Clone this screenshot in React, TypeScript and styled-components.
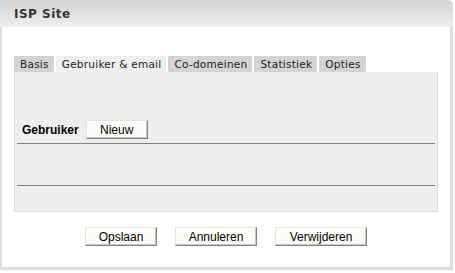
import React from 'react';
import styled, { createGlobalStyle } from 'styled-components';

const GlobalStyle = createGlobalStyle`
  html, body {
    margin: 0;
    padding: 0;
    background: #ffffff;
  }
`

const Frame = styled.div`
  width: 453px;
  height: 270px;
  box-sizing: border-box;
  display: flex;
  flex-direction: column;
  background: #ffffff;
  border-left: 2px solid #dedede;
  border-right: 3px solid #dedede;
  border-bottom: 3px solid #dedede;
  border-top-right-radius: 6px;
`

const Header = styled.div`
  height: 27px;
  margin: 0 -3px 0 -2px;
  padding-left: 14px;
  display: flex;
  align-items: center;
  background: linear-gradient(#d4d4d4, #eeeeee);
  border-top-right-radius: 6px;
  font-family: 'DejaVu Sans', Verdana, sans-serif;
  font-weight: bold;
  font-size: 12px;
  letter-spacing: 0.5px;
  color: #333333;
`

const Body = styled.div`
  padding: 29px 12px 0 12px;
  display: flex;
  flex-direction: column;
`

const TabBar = styled.div`
  display: flex;
  gap: 2px;
  height: 16px;
`

const Tab = styled.div<{ $active?: boolean }>`
  padding: 0 5px 0 6px;
  display: flex;
  align-items: center;
  background: ${p => (p.$active ? '#eeeeee' : '#d4d4d4')};
  font-family: 'DejaVu Sans', Verdana, sans-serif;
  font-size: 10.5px;
  letter-spacing: 0.25px;
  color: #222222;
`

const Panel = styled.div`
  height: 140px;
  box-sizing: border-box;
  padding: 48px 2px 0 2px;
  background: #eeeeee;
  border: 1px solid #dddddd;
  border-top: none;
`

const FieldRow = styled.div`
  display: flex;
  align-items: center;
  gap: 7px;
  padding-left: 5px;
  height: 19px;
`

const Label = styled.span`
  font-family: 'Liberation Sans', Arial, sans-serif;
  font-weight: bold;
  font-size: 12px;
  color: #000000;
`

const Button = styled.button<{ $width: number }>`
  width: ${p => p.$width}px;
  height: 19px;
  box-sizing: border-box;
  padding: 0;
  background: #fdfdf8;
  border: 1px solid;
  border-color: #e4e4e4 #808080 #808080 #e4e4e4;
  box-shadow: inset -1px -1px 0 #c8c8c0;
  font-family: 'Liberation Sans', Arial, sans-serif;
  font-size: 12px;
  color: #000000;
`

const Rule = styled.div<{ $gap: number }>`
  margin-top: ${p => p.$gap}px;
  height: 1px;
  background: #808080;
`

const Actions = styled.div`
  display: flex;
  justify-content: center;
  gap: 18px;
  margin-top: 15px;
`

const App: React.FC = () => {
  return (
    <>
      <GlobalStyle />
      <Frame>
        <Header>ISP Site</Header>
        <Body>
          <TabBar>
            <Tab>Basis</Tab>
            <Tab $active>Gebruiker &amp; email</Tab>
            <Tab>Co-domeinen</Tab>
            <Tab>Statistiek</Tab>
            <Tab>Opties</Tab>
          </TabBar>
          <Panel>
            <FieldRow>
              <Label>Gebruiker</Label>
              <Button $width={62}>Nieuw</Button>
            </FieldRow>
            <Rule $gap={4} />
            <Rule $gap={41} />
          </Panel>
          <Actions>
            <Button $width={72}>Opslaan</Button>
            <Button $width={82}>Annuleren</Button>
            <Button $width={92}>Verwijderen</Button>
          </Actions>
        </Body>
      </Frame>
    </>
  )
}

export default App
